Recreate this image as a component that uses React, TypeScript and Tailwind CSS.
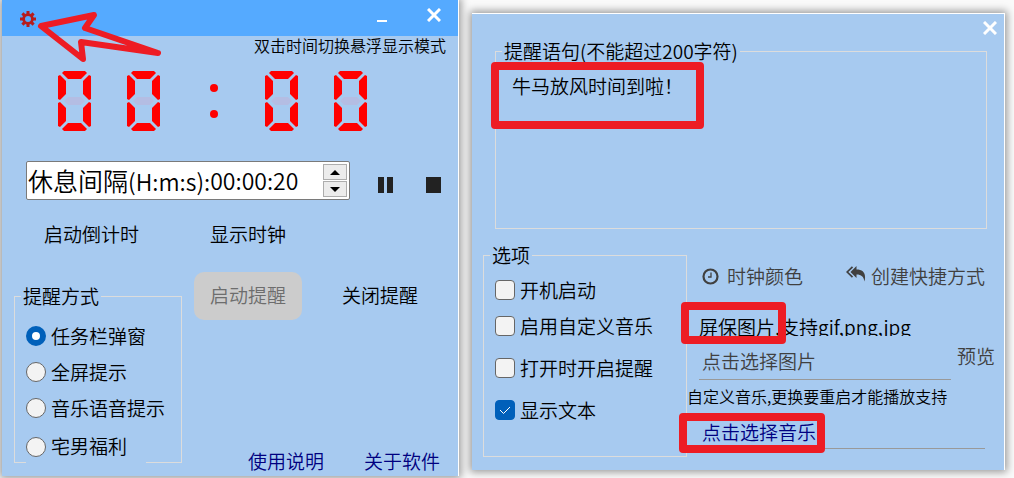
import { useState } from "react";

const reminderModes = ["任务栏弹窗", "全屏提示", "音乐语音提示", "宅男福利"];

const optionGroups = [["开机启动", "启用自定义音乐"], ["打开时开启提醒"], ["显示文本"]];

const Digit = () => (
  <svg width="34" height="60" viewBox="0 0 34 60" aria-hidden="true">
    <g fill="#ff0000">
      <path d="M6 0H27L29 2L23 8H10L4 2Z" />
      <path d="M0 5L2 4L8 10V23L2 29L0 28Z" />
      <path d="M33 5L31 4L25 10V23L31 29L33 28Z" />
      <path d="M0 32L2 31L8 37V50L2 56L0 55Z" />
      <path d="M33 32L31 31L25 37V50L31 56L33 55Z" />
      <path d="M10 52H23L29 58L27 60H6L4 58Z" />
    </g>
    <path d="M10 26H23L27 30L23 34H10L6 30Z" fill="#b4bde3" />
  </svg>
);

const Colon = () => (
  <svg width="34" height="60" viewBox="0 0 34 60" aria-hidden="true">
    <circle cx="18" cy="17" r="4" fill="#ff0000" />
    <circle cx="18" cy="43" r="4" fill="#ff0000" />
  </svg>
);

const CloseIcon = () => (
  <svg width="14" height="14" viewBox="0 0 14 14" aria-hidden="true">
    <path d="M1 1L13 13M13 1L1 13" stroke="#fff" strokeWidth="3" />
  </svg>
);

const GearIcon = () => (
  <svg width="16" height="16" viewBox="0 0 16 16" aria-hidden="true">
    <circle cx="8" cy="8" r="4.4" fill="none" stroke="#b71c1c" strokeWidth="2.8" />
    <path
      d="M8 0V3M8 13V16M0 8H3M13 8H16M2.4 2.4L4.4 4.4M11.6 11.6L13.6 13.6M2.4 13.6L4.4 11.6M11.6 4.4L13.6 2.4"
      stroke="#b71c1c"
      strokeWidth="3"
    />
  </svg>
);

const ClockIcon = () => (
  <svg width="17" height="17" viewBox="0 0 17 17" fill="none" stroke="#404040" aria-hidden="true">
    <circle cx="8.5" cy="8.5" r="7" strokeWidth="2.2" />
    <path d="M9 4.5V9H6" strokeWidth="1.3" />
  </svg>
);

const ReplyAllIcon = () => (
  <svg width="20" height="16" viewBox="0 0 20 16" className="mb-1" aria-hidden="true">
    <path d="M6.5 0.8L1.2 6L6.5 11.2" fill="none" stroke="#404040" strokeWidth="1.7" />
    <path d="M10.5 0V3.5C17 3.5 20.5 7 18.5 15.5C17.5 10.5 15.5 8.5 10.5 8.5V12L4.5 6Z" fill="#404040" />
  </svg>
);

const TimerWindow = () => {
  const [mode, setMode] = useState(reminderModes[0]);
  const [interval, setInterval] = useState("00:00:20");

  return (
    <section className="relative flex flex-col border-r border-white bg-[#a7caf0] pb-[13px] shadow-[0_0_8px_2px_rgba(0,0,0,0.4)]">
      <header className="flex h-9 items-start justify-between bg-[#55aaff] pt-[7px] pr-[17px] pl-[18px]">
        <button type="button" aria-label="设置" className="pt-1">
          <GearIcon />
        </button>
        <div className="flex items-start gap-10">
          <button type="button" aria-label="最小化" className="pt-[13px]">
            <span className="block h-0.5 w-2.5 bg-white" />
          </button>
          <button type="button" aria-label="关闭" className="pt-px">
            <CloseIcon />
          </button>
        </div>
      </header>

      <p className="pr-3 text-right text-[16px] leading-[18px]">双击时间切换悬浮显示模式</p>

      <div className="mt-[17px] flex gap-[35px] pl-14">
        <Digit />
        <Digit />
        <Colon />
        <Digit />
        <Digit />
      </div>

      <div className="mt-[30px] flex items-center pl-6">
        <div className="flex h-[39px] w-[324px] items-center rounded-xs border border-[#7a7a7a] bg-white pr-0.5 pl-px">
          <label htmlFor="interval" className="text-[25px] whitespace-nowrap">
            休息间隔<span className="text-[23px]">(H:m:s):</span>
          </label>
          <input
            id="interval"
            value={interval}
            onChange={(e) => setInterval(e.target.value)}
            className="min-w-0 flex-1 text-[23px] outline-none"
          />
          <div className="flex flex-col gap-px">
            <button
              type="button"
              aria-label="增加"
              className="flex h-4 w-6 items-center justify-center border border-[#adadad] bg-[#ececec]"
            >
              <svg width="10" height="5" viewBox="0 0 10 5">
                <path d="M5 0L10 5H0Z" />
              </svg>
            </button>
            <button
              type="button"
              aria-label="减少"
              className="flex h-4 w-6 items-center justify-center border border-[#adadad] bg-[#ececec]"
            >
              <svg width="10" height="5" viewBox="0 0 10 5">
                <path d="M0 0H10L5 5Z" />
              </svg>
            </button>
          </div>
        </div>
        <div className="flex gap-8 pt-2 pl-7">
          <button type="button" aria-label="暂停">
            <svg width="16" height="16" viewBox="0 0 16 16" fill="#222">
              <path d="M0 0H6V16H0ZM9 0H15V16H9Z" />
            </svg>
          </button>
          <button type="button" aria-label="停止">
            <svg width="16" height="16" viewBox="0 0 16 16" fill="#222">
              <path d="M0 0H15V16H0Z" />
            </svg>
          </button>
        </div>
      </div>

      <div className="mt-5 flex gap-[71px] pl-[42px] leading-7">
        <button type="button">启动倒计时</button>
        <button type="button">显示时钟</button>
      </div>

      <div className="mt-6 flex justify-between pr-[18px] pl-3">
        <fieldset className="mt-3 w-[168px] border border-[#dcdcdc] px-[11px] pt-3.5">
          <legend className="-ml-[5px] px-0.5 leading-6">提醒方式</legend>
          <div className="flex flex-col gap-2">
            {reminderModes.map((item) => (
              <label
                key={item}
                className="flex h-7 items-center gap-[5px] whitespace-nowrap last:-mb-px last:h-[33px] last:w-[120px] last:bg-[#a7caf0]"
              >
                <input
                  type="radio"
                  name="mode"
                  checked={mode === item}
                  onChange={() => setMode(item)}
                  className="size-5 shrink-0 appearance-none rounded-full border border-[#666] bg-[#f3f3f3] checked:border-6 checked:border-[#0060ba] checked:bg-white"
                />
                {item}
              </label>
            ))}
          </div>
        </fieldset>
        <div className="flex flex-col justify-between">
          <div className="flex items-center gap-10 pr-[22px]">
            <button type="button" disabled className="h-12 w-[108px] rounded-[10px] bg-[#cccccc] pb-0.5 text-[#6d6d6d]">
              启动提醒
            </button>
            <button type="button" className="pb-0.5">
              关闭提醒
            </button>
          </div>
          <nav className="-mb-3 flex justify-end gap-10 leading-7 text-[#000080]">
            <a href="#help">使用说明</a>
            <a href="#about">关于软件</a>
          </nav>
        </div>
      </div>

      <svg
        width="126"
        height="52"
        viewBox="0 0 126 52"
        fill="none"
        className="pointer-events-none absolute top-[11px] left-[34px]"
        aria-hidden="true"
      >
        <path
          d="M5 15L58 4L49 17L122 42L45 31L47 48Z"
          stroke="#ed1c24"
          strokeWidth="6"
          strokeLinecap="round"
          strokeLinejoin="round"
        />
      </svg>
    </section>
  );
};

const SettingsWindow = () => {
  const [message, setMessage] = useState("牛马放风时间到啦！");

  return (
    <section className="relative mt-[13px] border-t border-r border-white bg-[#a7caf0] pb-[13px] shadow-[0_0_8px_2px_rgba(0,0,0,0.4)]">
      <header className="flex h-[25px] justify-end pt-[7px] pr-[7px]">
        <button type="button" aria-label="关闭" className="self-start">
          <CloseIcon />
        </button>
      </header>

      <fieldset className="mr-[17px] ml-[23px] border border-[#dcdcdc] px-4 pt-[9px] pb-1">
        <legend className="-ml-2.5 px-0.5 leading-6 whitespace-nowrap">
          提醒语句(不能超过200字符)
        </legend>
        <textarea
          aria-label="提醒语句"
          maxLength={200}
          value={message}
          onChange={(e) => setMessage(e.target.value)}
          className="block h-38 w-full resize-none leading-7 outline-none"
        />
      </fieldset>

      <div className="mt-3.5 grid grid-cols-[204px_1fr] pl-[11px]">
        <fieldset className="border border-[#dcdcdc] px-[11px] pt-[5px] pb-7">
          <legend className="-ml-[5px] px-0.5 leading-6">选项</legend>
          <div className="flex flex-col gap-1.5">
            {optionGroups.map((group) => (
              <div key={group[0]}>
                {group.map((item) => (
                  <label key={item} className="flex h-9 items-center gap-[5px] whitespace-nowrap">
                    <span className="grid shrink-0 place-items-center">
                      <input
                        type="checkbox"
                        defaultChecked={item === "显示文本"}
                        className="peer col-start-1 row-start-1 size-5 appearance-none rounded-sm border border-[#666] bg-[#f3f3f3] checked:border-[#0060ba] checked:bg-[#0060ba]"
                      />
                      <svg
                        width="12"
                        height="12"
                        viewBox="0 0 12 12"
                        fill="none"
                        stroke="#fff"
                        className="pointer-events-none invisible col-start-1 row-start-1 peer-checked:visible"
                      >
                        <path d="M1 6L4.5 9.5L11 3" />
                      </svg>
                    </span>
                    {item}
                  </label>
                ))}
              </div>
            ))}
          </div>
        </fieldset>

        <div className="flex flex-col">
          <div className="flex justify-between pt-[19px] pr-[19px] pl-[15px] leading-7 text-[#404040]">
            <button type="button" className="flex items-center gap-2">
              <ClockIcon />
              时钟颜色
            </button>
            <button type="button" className="flex items-center gap-[5px]">
              <ReplyAllIcon />
              创建快捷方式
            </button>
          </div>

          <p className="mt-6 h-[22px] overflow-hidden pl-3 leading-[26px]">屏保图片,支持gif,png,jpg</p>
          <div className="mt-[7px] flex items-start gap-1.5 pr-[9px] pl-3 text-[#404040]">
            <button type="button" className="h-[37px] flex-1 border-b border-[#999] pl-[3px] text-left">
              点击选择图片
            </button>
            <button type="button" className="leading-[26px]">
              预览
            </button>
          </div>

          <p className="mt-1.5 text-[16px] leading-5">自定义音乐,更换要重启才能播放支持</p>
          <button
            type="button"
            className="mt-[11px] mr-[19px] ml-3 h-8 border-b border-[#999] pl-[3px] text-left text-[#000080]"
          >
            点击选择音乐
          </button>
        </div>
      </div>

      {/* highlight frames */}
      <div className="pointer-events-none absolute top-12 left-[19px] h-[67px] w-[213px] rounded-sm border-8 border-[#ed1c24]" />
      <div className="pointer-events-none absolute top-[288px] left-[209px] h-[42px] w-[105px] rounded-sm border-8 border-[#ed1c24]" />
      <div className="pointer-events-none absolute top-[399px] left-[207px] h-10 w-[146px] rounded-sm border-8 border-[#ed1c24]" />
    </section>
  );
};

export default function App() {
  return (
    <main className="grid min-h-screen grid-cols-[457fr_533fr] items-start gap-[13px] overflow-hidden bg-[#fafafa] pr-[9px] pl-0.5 font-['Noto_Sans_CJK_SC',sans-serif] text-[19px] font-[350] text-black">
      <TimerWindow />
      <SettingsWindow />
    </main>
  );
}
